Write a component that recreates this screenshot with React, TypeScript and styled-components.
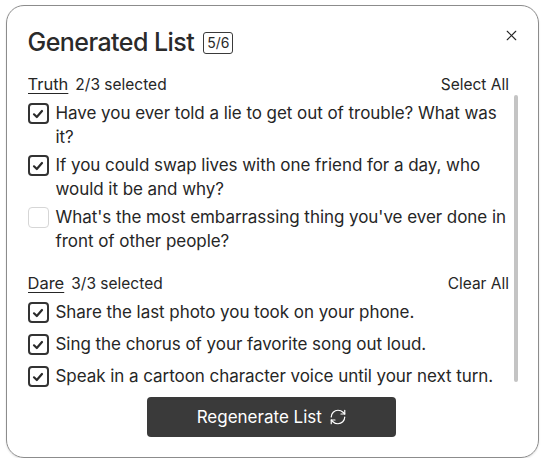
import styled, { createGlobalStyle } from "styled-components";
import { X, RefreshCw } from "lucide-react";

const GlobalStyle = createGlobalStyle`
  html, body {
    margin: 0;
    background: #ffffff;
    font-family: Inter, "Noto Sans", sans-serif;
    color: #262626;
  }
`;

const Modal = styled.div`
  box-sizing: border-box;
  width: 533px;
  height: 453px;
  margin: 5px 0 0 6px;
  border: 1.5px solid #8c8c8c;
  border-radius: 18px;
  padding: 16px 22px 20px 20.5px;
  display: flex;
  flex-direction: column;
  box-shadow: 0 1px 2px rgba(0, 0, 0, 0.12);
`;

const Header = styled.div`
  display: flex;
  align-items: center;
  justify-content: space-between;
  height: 40px;
`;

const TitleWrap = styled.div`
  display: flex;
  align-items: center;
  gap: 9px;
`;

const Title = styled.h2`
  margin: 0;
  font-size: 25px;
  font-weight: 500;
  line-height: 40px;
  color: #2a2a2a;
  letter-spacing: -0.55px;
`;

const Badge = styled.span`
  box-sizing: border-box;
  height: 22px;
  padding: 0 3px;
  border: 1px solid #3a3a3a;
  border-radius: 3px;
  font-size: 14px;
  line-height: 20px;
  color: #2a2a2a;
  margin-top: 2px;
`;

const CloseButton = styled.button`
  border: none;
  background: none;
  padding: 0;
  margin-top: -14px;
  margin-right: -4px;
  display: flex;
  color: #262626;
  cursor: pointer;
`;

const ScrollWrap = styled.div`
  position: relative;
  margin-top: 10px;
  height: 317px;
`;

const Scroller = styled.div`
  height: 100%;
  overflow-y: auto;
  padding-right: 7px;
  scrollbar-width: none;
  &::-webkit-scrollbar {
    display: none;
  }
`;

const ScrollThumb = styled.div`
  position: absolute;
  right: -2px;
  top: 23px;
  width: 4px;
  height: 287px;
  border-radius: 2px;
  background: #c4c4c4;
`;

const Section = styled.section<{ $first?: boolean }>`
  margin-top: ${(p) => (p.$first ? 0 : 18)}px;
`;

const SectionHead = styled.div`
  display: flex;
  align-items: center;
  justify-content: space-between;
  height: 24px;
  margin-bottom: 5px;
  font-size: 16px;
`;

const SectionLabel = styled.div`
  display: flex;
  align-items: baseline;
  gap: 7px;
`;

const SectionName = styled.span`
  text-decoration: underline;
  text-underline-offset: 3px;
  text-decoration-thickness: 1px;
  font-size: 16.5px;
`;

const Count = styled.span`
  font-size: 15.5px;
`;

const LinkButton = styled.button`
  border: none;
  background: none;
  padding: 0;
  font-family: inherit;
  font-size: 15.5px;
  color: #262626;
  cursor: pointer;
`;

const Rows = styled.div`
  display: flex;
  flex-direction: column;
  gap: 4px;
`;

const Row = styled.label`
  display: flex;
  align-items: flex-start;
  gap: 7px;
  min-height: 28px;
  font-size: 17px;
  line-height: 24px;
  letter-spacing: -0.05px;
  color: #262626;
`;

const Box = styled.span<{ $checked: boolean }>`
  box-sizing: border-box;
  flex: none;
  width: 21px;
  height: 21px;
  margin-top: 2px;
  border: ${(p) => (p.$checked ? "2px solid #333" : "1.5px solid #d6d6d6")};
  border-radius: 4px;
  display: flex;
  align-items: center;
  justify-content: center;
`;

const Footer = styled.div`
  display: flex;
  justify-content: center;
  margin-top: 8px;
`;

const Regenerate = styled.button`
  width: 249px;
  height: 40px;
  border: none;
  border-radius: 4px;
  background: #3a3a3a;
  color: #ffffff;
  font-family: inherit;
  font-size: 17px;
  display: flex;
  align-items: center;
  justify-content: center;
  gap: 7px;
  cursor: pointer;
`;

const Check = () => (
  <svg width="12" height="12" viewBox="0 0 12 12" fill="none">
    <path
      d="M2 6.3 L4.8 9 L10 3"
      stroke="#2a2a2a"
      strokeWidth="2.2"
      strokeLinecap="round"
      strokeLinejoin="round"
    />
  </svg>
);

type Item = { text: string; checked: boolean };

const sections: { name: string; action: string; items: Item[] }[] = [
  {
    name: "Truth",
    action: "Select All",
    items: [
      { text: "Have you ever told a lie to get out of trouble? What was it?", checked: true },
      { text: "If you could swap lives with one friend for a day, who would it be and why?", checked: true },
      { text: "What's the most embarrassing thing you've ever done in front of other people?", checked: false },
    ],
  },
  {
    name: "Dare",
    action: "Clear All",
    items: [
      { text: "Share the last photo you took on your phone.", checked: true },
      { text: "Sing the chorus of your favorite song out loud.", checked: true },
      { text: "Speak in a cartoon character voice until your next turn.", checked: true },
    ],
  },
];

export default function App() {
  const total = sections.reduce((n, s) => n + s.items.length, 0);
  const picked = sections.reduce((n, s) => n + s.items.filter((i) => i.checked).length, 0);
  return (
    <>
      <GlobalStyle />
      <Modal>
        <Header>
          <TitleWrap>
            <Title>Generated List</Title>
            <Badge>
              {picked}/{total}
            </Badge>
          </TitleWrap>
          <CloseButton aria-label="Close">
            <X size={17} strokeWidth={1.6} />
          </CloseButton>
        </Header>
        <ScrollWrap>
          <Scroller>
            {sections.map((s, si) => (
              <Section key={s.name} $first={si === 0}>
                <SectionHead>
                  <SectionLabel>
                    <SectionName>{s.name}</SectionName>
                    <Count>
                      {s.items.filter((i) => i.checked).length}/{s.items.length} selected
                    </Count>
                  </SectionLabel>
                  <LinkButton>{s.action}</LinkButton>
                </SectionHead>
                <Rows>
                  {s.items.map((it) => (
                    <Row key={it.text}>
                      <Box $checked={it.checked}>{it.checked && <Check />}</Box>
                      <span>{it.text}</span>
                    </Row>
                  ))}
                </Rows>
              </Section>
            ))}
          </Scroller>
          <ScrollThumb />
        </ScrollWrap>
        <Footer>
          <Regenerate>
            Regenerate List
            <RefreshCw size={18} strokeWidth={1.6} />
          </Regenerate>
        </Footer>
      </Modal>
    </>
  );
}
